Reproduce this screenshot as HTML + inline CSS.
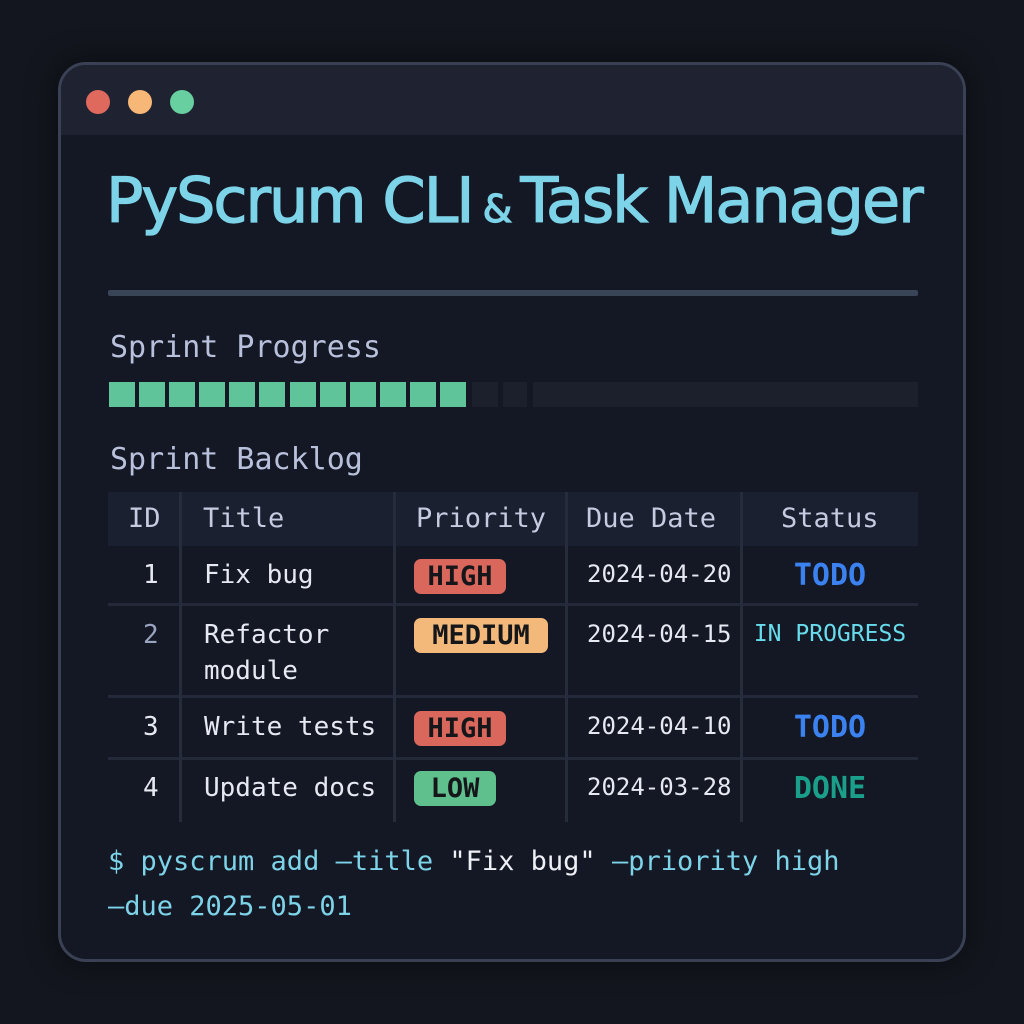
<!DOCTYPE html>
<html><head><meta charset="utf-8"><style>
*{margin:0;padding:0;box-sizing:border-box}
body{width:1024px;height:1024px;background:#13161e;position:relative;overflow:hidden;font-family:"DejaVu Sans Mono","Liberation Mono",monospace}
.a{position:absolute;white-space:nowrap}
.win{position:absolute;left:58px;top:62px;width:908px;height:900px;border-radius:28px;border:3px solid #3a4154;background:#141824;overflow:hidden;box-shadow:0 0 30px rgba(0,0,0,.5)}
.bar{position:absolute;left:0;top:0;width:100%;height:70px;background:#1f2331}
.dot{position:absolute;top:25px;width:24px;height:24px;border-radius:50%}
.m{font-size:26px;color:#e6e9f2;line-height:1}
.h{font-size:27px;color:#c5cbe0;line-height:1}
.badge{position:absolute;left:414px;height:35px;border-radius:7px;font-weight:bold;color:#15161a;font-size:27px;line-height:35px;text-align:center;font-family:"DejaVu Sans Mono",monospace}
.st{position:absolute;left:742px;width:176px;text-align:center;font-weight:bold;font-size:30px;line-height:1}
.vl{position:absolute;width:3px;background:#262c3b;top:492px;height:330px}
.hl{position:absolute;left:108px;width:810px;height:3px;background:#232938}
.blk{position:absolute;top:382px;width:26px;height:25px;background:#5fc49a}
</style></head><body>
<div class="win"><div class="bar"></div>
<div class="dot" style="left:25px;background:#e0695e"></div>
<div class="dot" style="left:67px;background:#f7b877"></div>
<div class="dot" style="left:109px;background:#67cfa0"></div>
</div>
<div class="a" style="left:106px;top:170px;font-family:'DejaVu Sans',sans-serif;font-size:62px;color:#7dd3e8;line-height:1;letter-spacing:-2px;-webkit-text-stroke:1.2px #7dd3e8">PyScrum CLI<span style="font-size:38px"> &amp; </span>Task Manager</div>
<div class="a" style="left:108px;top:290px;width:810px;height:6px;background:#3a4457;border-radius:2px"></div>
<div class="a" style="left:110px;top:333px;font-size:30px;color:#b8c0dc;line-height:1">Sprint Progress</div>
<div class="blk" style="left:109px"></div><div class="blk" style="left:139px"></div><div class="blk" style="left:169px"></div><div class="blk" style="left:199px"></div><div class="blk" style="left:229px"></div><div class="blk" style="left:259px"></div><div class="blk" style="left:290px"></div><div class="blk" style="left:320px"></div><div class="blk" style="left:350px"></div><div class="blk" style="left:380px"></div><div class="blk" style="left:410px"></div><div class="blk" style="left:440px"></div>
<div class="blk" style="left:472px;background:#1c202c"></div><div class="blk" style="left:503px;width:24px;background:#1c202c"></div>
<div class="a" style="left:533px;top:382px;width:385px;height:25px;background:#1c202c"></div>
<div class="a" style="left:110px;top:445px;font-size:30px;color:#b8c0dc;line-height:1">Sprint Backlog</div>
<div class="a" style="left:108px;top:492px;width:810px;height:54px;background:#1b2030"></div>
<div class="hl" style="top:603px"></div><div class="hl" style="top:695px"></div><div class="hl" style="top:757px"></div>
<div class="vl" style="left:179px"></div><div class="vl" style="left:393px"></div><div class="vl" style="left:565px"></div><div class="vl" style="left:740px"></div>
<div class="a h" style="left:128px;top:505px">ID</div>
<div class="a h" style="left:203px;top:505px">Title</div>
<div class="a h" style="left:416px;top:505px">Priority</div>
<div class="a h" style="left:586px;top:505px">Due Date</div>
<div class="a h" style="left:781px;top:505px">Status</div>
<div class="a m" style="left:143px;top:562px">1</div>
<div class="a m" style="left:143px;top:622px;color:#9aa3c0">2</div>
<div class="a m" style="left:143px;top:714px">3</div>
<div class="a m" style="left:143px;top:775px">4</div>
<div class="a m" style="left:204px;top:562px">Fix bug</div>
<div class="a m" style="left:204px;top:622px">Refactor</div>
<div class="a m" style="left:204px;top:658px">module</div>
<div class="a m" style="left:204px;top:714px">Write tests</div>
<div class="a m" style="left:204px;top:775px">Update docs</div>
<div class="badge" style="top:559px;width:92px;background:#d9675c">HIGH</div>
<div class="badge" style="top:618px;width:134px;background:#f2b97a">MEDIUM</div>
<div class="badge" style="top:711px;width:92px;background:#d9675c">HIGH</div>
<div class="badge" style="top:771px;width:82px;background:#5fc08d">LOW</div>
<div class="a m" style="left:587px;top:562px;font-size:24px">2024-04-20</div>
<div class="a m" style="left:587px;top:622px;font-size:24px">2024-04-15</div>
<div class="a m" style="left:587px;top:714px;font-size:24px">2024-04-10</div>
<div class="a m" style="left:587px;top:775px;font-size:24px">2024-03-28</div>
<div class="st" style="top:561px;color:#3b82f0">TODO</div>
<div class="st" style="top:623px;color:#67dcec;font-weight:normal;font-size:23px">IN PROGRESS</div>
<div class="st" style="top:713px;color:#3b82f0">TODO</div>
<div class="st" style="top:774px;color:#1aa08a">DONE</div>
<div class="a" style="left:108px;top:848px;font-size:27px;color:#7dd3e8;line-height:1">$ pyscrum add —title <span style="color:#eef0f6">"Fix bug"</span> —priority high</div>
<div class="a" style="left:108px;top:893px;font-size:27px;color:#7dd3e8;line-height:1">—due 2025-05-01</div>
</body></html>
